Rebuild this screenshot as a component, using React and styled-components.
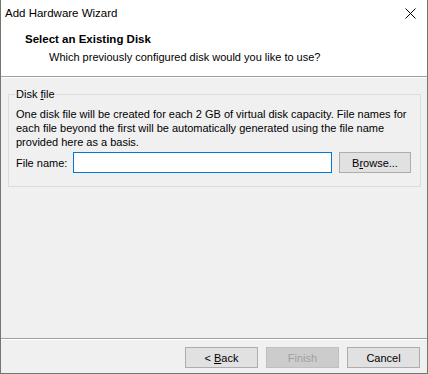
import React from "react";
import styled, { createGlobalStyle } from "styled-components";

const Global = createGlobalStyle`
  html, body { margin: 0; padding: 0; background: #fff; }
  * { box-sizing: border-box; }
  body { font-family: "Liberation Sans", Arial, sans-serif; font-size: 11px; color: #000; }
`;

const Window = styled.div`
  width: 428px;
  height: 374px;
  border: 1px solid #6b7a6b;
  border-top: none;
  display: flex;
  flex-direction: column;
  background: #f0f0f0;
`;

const TitleBar = styled.div`
  height: 26px;
  display: flex;
  align-items: center;
  justify-content: space-between;
  padding: 0 11px 0 4px;
  background: #fff;
  font-size: 11.5px;
`;

const Header = styled.div`
  height: 51px;
  background: #fff;
  padding: 6px 0 0 24px;
  display: flex;
  flex-direction: column;
  gap: 3px;
  border-bottom: 1px solid #a0a0a0;
`;

const HeaderTitle = styled.div`
  font-weight: bold;
  font-size: 11.5px;
  line-height: 15px;
`;

const HeaderSub = styled.div`
  padding-left: 24px;
  line-height: 15px;
`;

const Body = styled.div`
  flex: 1;
  border-top: 1px solid #fff;
  padding: 9px 7px 0 7px;
`;

const Group = styled.fieldset`
  margin: 0;
  border: 1px solid #dcdcdc;
  padding: 6px 9px 10px 7px;
  height: 100px;
`;

const Legend = styled.legend`
  padding: 0 1px;
  margin-left: -1px;
  line-height: 14px;
`;

const Para = styled.p`
  margin: 0 0 3px 0;
  line-height: 14px;
`;

const Row = styled.div`
  display: flex;
  align-items: center;
  gap: 7px;
`;

const Label = styled.span`
  width: 50px;
  flex-shrink: 0;
  white-space: nowrap;
`;

const Input = styled.div`
  width: 259px;
  height: 21px;
  flex-shrink: 0;
  border: 1px solid #0078d7;
  background: #fff;
`;

const Button = styled.button`
  width: ${(p) => p.$w || 73}px;
  height: 21px;
  flex-shrink: 0;
  margin: 0;
  padding: 0;
  font-family: inherit;
  font-size: 11px;
  color: ${(p) => (p.disabled ? "#a0a0a0" : "#000")};
  background: ${(p) => (p.disabled ? "#cccccc" : "#e1e1e1")};
  border: 1px solid ${(p) => (p.disabled ? "#bfbfbf" : "#adadad")};
`;

const Footer = styled.div`
  height: 35px;
  border-top: 1px solid #a0a0a0;
  box-shadow: inset 0 1px 0 #fff;
  display: flex;
  justify-content: flex-end;
  align-items: flex-start;
  gap: 8px;
  padding: 8px 7px 0 0;
`;

const U = styled.span`
  text-decoration: underline;
`;

const Close = () => (
  <svg width="11" height="11" viewBox="0 0 11 11">
    <path d="M0.5 0.5 L10.5 10.5 M10.5 0.5 L0.5 10.5" stroke="#000" strokeWidth="1" fill="none" />
  </svg>
);

export default function App() {
  return (
    <>
      <Global />
      <Window>
        <TitleBar>
          <span>Add Hardware Wizard</span>
          <Close />
        </TitleBar>
        <Header>
          <HeaderTitle>Select an Existing Disk</HeaderTitle>
          <HeaderSub>Which previously configured disk would you like to use?</HeaderSub>
        </Header>
        <Body>
          <Group>
            <Legend>
              Disk <U>f</U>ile
            </Legend>
            <Para>
              One disk file will be created for each 2 GB of virtual disk capacity. File names for
              each file beyond the first will be automatically generated using the file name
              provided here as a basis.
            </Para>
            <Row>
              <Label>File name:</Label>
              <Input />
              <Button $w={72}>
                B<U>r</U>owse...
              </Button>
            </Row>
          </Group>
        </Body>
        <Footer>
          <Button>
            &lt; <U>B</U>ack
          </Button>
          <Button disabled>Finish</Button>
          <Button>Cancel</Button>
        </Footer>
      </Window>
    </>
  );
}
